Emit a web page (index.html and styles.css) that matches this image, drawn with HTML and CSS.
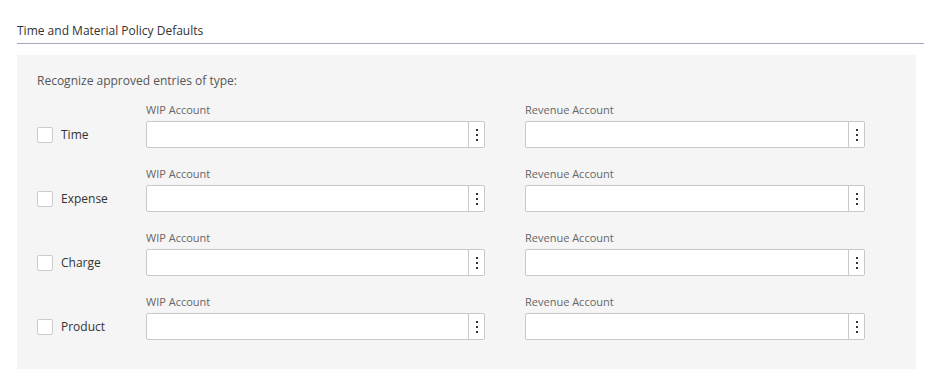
FILE: index.html
```html
<!DOCTYPE html>
<html lang="en">
<head>
    <meta charset="UTF-8">
    <meta name="viewport" content="width=device-width, initial-scale=1.0">
    <title>Time and Material Policy Defaults</title>
    <link rel="stylesheet" href="styles.css">
</head>
<body>
    <div class="section">
        <div class="section-header">Time and Material Policy Defaults</div>

        <div class="panel">
            <div class="panel-title">Recognize approved entries of type:</div>

            <div class="entry-row">
                <label class="check"><span class="box"></span>Time</label>
                <div class="field">
                    <div class="field-label">WIP Account</div>
                    <div class="lookup"><input type="text"><span class="more"><i></i><i></i><i></i></span></div>
                </div>
                <div class="field">
                    <div class="field-label">Revenue Account</div>
                    <div class="lookup"><input type="text"><span class="more"><i></i><i></i><i></i></span></div>
                </div>
            </div>

            <div class="entry-row">
                <label class="check"><span class="box"></span>Expense</label>
                <div class="field">
                    <div class="field-label">WIP Account</div>
                    <div class="lookup"><input type="text"><span class="more"><i></i><i></i><i></i></span></div>
                </div>
                <div class="field">
                    <div class="field-label">Revenue Account</div>
                    <div class="lookup"><input type="text"><span class="more"><i></i><i></i><i></i></span></div>
                </div>
            </div>

            <div class="entry-row">
                <label class="check"><span class="box"></span>Charge</label>
                <div class="field">
                    <div class="field-label">WIP Account</div>
                    <div class="lookup"><input type="text"><span class="more"><i></i><i></i><i></i></span></div>
                </div>
                <div class="field">
                    <div class="field-label">Revenue Account</div>
                    <div class="lookup"><input type="text"><span class="more"><i></i><i></i><i></i></span></div>
                </div>
            </div>

            <div class="entry-row">
                <label class="check"><span class="box"></span>Product</label>
                <div class="field">
                    <div class="field-label">WIP Account</div>
                    <div class="lookup"><input type="text"><span class="more"><i></i><i></i><i></i></span></div>
                </div>
                <div class="field">
                    <div class="field-label">Revenue Account</div>
                    <div class="lookup"><input type="text"><span class="more"><i></i><i></i><i></i></span></div>
                </div>
            </div>
        </div>
    </div>
</body>
</html>
```

FILE: styles.css
```css
* {
    margin: 0;
    padding: 0;
    box-sizing: border-box;
}

body {
    font-family: 'Open Sans', 'Noto Sans', sans-serif;
    background: white;
    color: #333;
}

.section {
    width: 907px;
    margin-left: 17px;
}

.section-header {
    font-size: 12px;
    line-height: 17px;
    padding-top: 22px;
    padding-bottom: 4px;
    border-bottom: 1px solid #a3a9b8;
    color: #333;
}

.panel {
    width: 899px;
    margin-top: 11px;
    background: #f5f5f5;
    padding: 17px 20px 29px;
}

.panel-title {
    font-size: 12px;
    line-height: 17px;
    color: #555;
    margin-bottom: 13px;
}

.entry-row {
    display: flex;
    align-items: flex-end;
    margin-bottom: 18px;
}

.entry-row:last-child {
    margin-bottom: 0;
}

.check {
    flex-shrink: 0;
    width: 109px;
    height: 27px;
    display: flex;
    align-items: center;
    font-size: 12px;
    color: #333;
}

.box {
    width: 16px;
    height: 16px;
    background: white;
    border: 1px solid #ccc;
    border-radius: 2px;
    margin-right: 8px;
}

.field {
    flex-shrink: 0;
    width: 339px;
    margin-right: 40px;
}

.field:last-child {
    width: 340px;
    margin-right: 0;
}

.field-label {
    font-size: 11px;
    line-height: 15px;
    color: #666;
    margin-bottom: 4px;
}

.lookup {
    display: flex;
    height: 27px;
    background: white;
    border: 1px solid #c8c8c8;
    border-radius: 2px;
}

.lookup input {
    flex: 1;
    border: none;
    outline: none;
    background: transparent;
    min-width: 0;
}

.more {
    width: 16px;
    border-left: 1px solid #c8c8c8;
    display: flex;
    flex-direction: column;
    align-items: center;
    justify-content: center;
    gap: 3px;
}

.more i {
    width: 2px;
    height: 2px;
    background: #333;
}
```
